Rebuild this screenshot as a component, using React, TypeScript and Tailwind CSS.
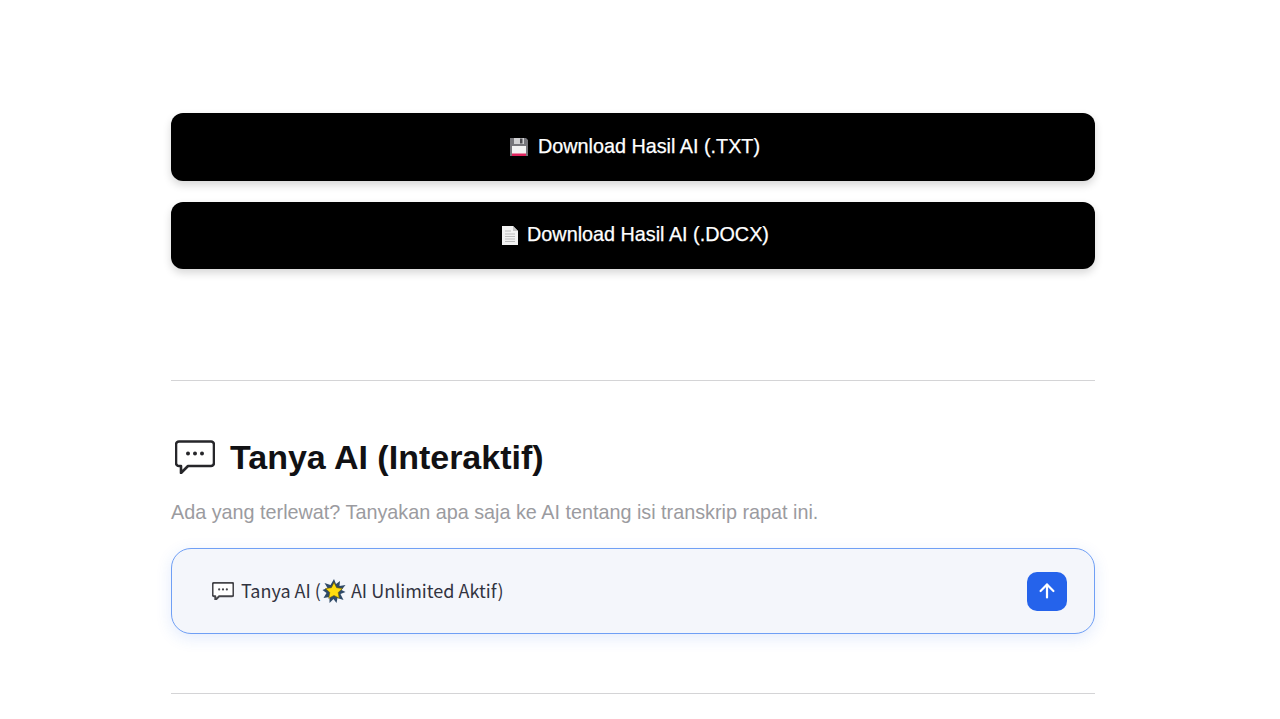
import React from 'react';
import { ArrowUp } from 'lucide-react';

function FloppyIcon() {
  return (
    <svg width="18" height="18" viewBox="1 1 18 18" className="shrink-0">
      <path d="M1 1h16l2 2v16H1z" fill="#77777c" />
      <rect x="5" y="1" width="10" height="6" fill="#d2d2d4" />
      <rect x="11" y="1.5" width="2.5" height="5" fill="#4a4a4f" />
      <rect x="3" y="9" width="14" height="10" fill="#f4f4f4" />
      <rect x="3" y="16.5" width="14" height="2.5" fill="#e0245e" />
    </svg>
  );
}

function DocIcon() {
  return (
    <svg width="18" height="21" viewBox="0 0 18 21" className="shrink-0">
      <path d="M1 1h11l5 5v14H1z" fill="#f2f2f2" />
      <path d="M12 1l5 5h-5z" fill="#c4c4c4" />
      <path d="M4 6h6M4 9h10M4 11.5h10M4 14h10M4 16.5h10" stroke="#bcbcbc" strokeWidth="1" />
    </svg>
  );
}

function ChatIcon({ width, color, stroke }: { width: number; color: string; stroke: number }) {
  return (
    <svg width={width} height={(width * 34) / 40} viewBox="0 0 40 34" fill="none" className="shrink-0">
      <path
        d="M4 1.5h32a3 3 0 0 1 3 3v18.500a3 3 0 0 1-3 3H13l-7 7v-7H4a3 3 0 0 1-3-3V4.500a3 3 0 0 1 3-3z"
        fill="#fff"
        stroke={color}
        strokeWidth={stroke}
        strokeLinejoin="round"
      />
      <circle cx="13" cy="13.5" r="2" fill={color} />
      <circle cx="20" cy="13.5" r="2" fill={color} />
      <circle cx="27" cy="13.5" r="2" fill={color} />
    </svg>
  );
}

function BurstIcon() {
  return (
    <svg width="24" height="24" viewBox="0 0 24 24" className="shrink-0">
      <path
        d="M12 0l2 5 4-3-.5 5 6-1-4 5 4 2-5 2 3 6-6-2-1 5-3-4-4 4v-6l-6 1 3-5-4-3 5-2-3-5 6 2z"
        fill="#2f4a68"
      />
      <path
        d="M12 3.500l2.600 5.200 5.900.8-4.300 4 1.100 5.800-5.300-2.800-5.300 2.800 1.100-5.800-4.300-4 5.900-.8z"
        fill="#ffdc0f"
        stroke="#6b5a00"
        strokeWidth="0.6"
      />
    </svg>
  );
}

function DownloadButton({ icon, label, gap }: { icon: React.ReactNode; label: string; gap: string }) {
  return (
    <button className="w-full h-[67.5px] pl-[4px] bg-black rounded-[12px] shadow-[0_4px_8px_rgba(0,0,0,0.16)] flex items-center justify-center text-white text-[19.8px] [-webkit-text-stroke:0.25px_#fff]">
      <span className={`flex items-center ${gap}`}>
        {icon}
        {label}
      </span>
    </button>
  );
}

export default function App() {
  return (
    <div className="h-[719px] overflow-hidden bg-white font-['Liberation_Sans',Arial,sans-serif]">
      <div className="w-[924px] ml-[171px] pt-[113px]">
        <div className="flex flex-col gap-[21px]">
          <DownloadButton icon={<FloppyIcon />} label="Download Hasil AI (.TXT)" gap="gap-[10px]" />
          <DownloadButton icon={<DocIcon />} label="Download Hasil AI (.DOCX)" gap="gap-[8px]" />
        </div>

        <hr className="mt-[111px] border-0 border-t border-[#d4d4d6]" />

        <div className="mt-[56px] pl-[4px] flex items-center gap-[15px] h-[40px]">
          <ChatIcon width={40} color="#26262a" stroke={2.6} />
          <h2 className="text-[34px] leading-[40px] font-bold text-[#111114]">Tanya AI (Interaktif)</h2>
        </div>

        <p className="mt-[22px] text-[19.8px] leading-[26px] text-[#9b9ba0]">
          Ada yang terlewat? Tanyakan apa saja ke AI tentang isi transkrip rapat ini.
        </p>

        <div className="mt-[23px] h-[86px] rounded-[20px] border border-[#6f9ff5] bg-[#f4f6fb] shadow-[0_4px_16px_rgba(37,99,235,0.13)] flex items-center justify-between pl-[40px] pr-[27px]">
          <div className="flex items-center text-[18px] text-[#31333f] font-['Noto_Sans_CJK_SC','Noto_Sans',sans-serif]">
            <ChatIcon width={22} color="#45454a" stroke={3.6} />
            <span className="ml-[7px] pb-[2px]">Tanya AI (</span>
            <span className="ml-[1px]"><BurstIcon /></span>
            <span className="ml-[5px] pb-[2px]">AI Unlimited Aktif)</span>
          </div>
          <button className="w-[40px] h-[39px] rounded-[10px] bg-[#2563eb] flex items-center justify-center text-white">
            <ArrowUp size={22} strokeWidth={2.4} />
          </button>
        </div>

        <hr className="mt-[59px] border-0 border-t border-[#d4d4d6]" />
      </div>
    </div>
  );
}
